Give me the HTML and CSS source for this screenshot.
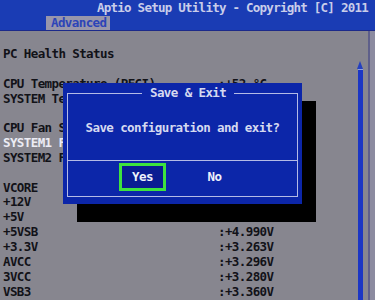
FILE: index.html
```html
<!DOCTYPE html>
<html lang="en">
<head>
  <meta charset="UTF-8" />
  <meta name="viewport" content="width=device-width, initial-scale=1.0"/>
  <title>Aptio Setup Utility</title>
  <link rel="stylesheet" href="styles.css">
</head>
<body>

  <header class="topbar">
    <div class="title">Aptio Setup Utility - Copyright [C] 2011</div>
    <div class="tabs"><span class="tab">Advanced</span></div>
  </header>

  <main class="screen">
    <div class="list">
      <div class="row">PC Health Status</div>
      <div class="row"></div>
      <div class="row"><span class="label">CPU Temperature (PECI)</span><span>:+52 °C</span></div>
      <div class="row"><span class="label">SYSTEM Temperature</span><span>:+36 °C</span></div>
      <div class="row"></div>
      <div class="row"><span class="label">CPU Fan Speed</span><span>:N/A</span></div>
      <div class="row lit"><span class="label">SYSTEM1 Fan Speed</span><span>:N/A</span></div>
      <div class="row"><span class="label">SYSTEM2 Fan Speed</span><span>:N/A</span></div>
      <div class="row"></div>
      <div class="row"><span class="label">VCORE</span><span>:+1.048V</span></div>
      <div class="row"><span class="label">+12V</span><span>:+12.096V</span></div>
      <div class="row"><span class="label">+5V</span><span>:+4.980V</span></div>
      <div class="row"><span class="label">+5VSB</span><span>:+4.990V</span></div>
      <div class="row"><span class="label">+3.3V</span><span>:+3.263V</span></div>
      <div class="row"><span class="label">AVCC</span><span>:+3.296V</span></div>
      <div class="row"><span class="label">3VCC</span><span>:+3.280V</span></div>
      <div class="row"><span class="label">VSB3</span><span>:+3.360V</span></div>
    </div>
    <div class="scroll"></div>
    <div class="edge"></div>
  </main>

  <!-- ventana modal encima de la lista -->
  <div class="dialog">
    <fieldset class="frame">
      <legend>Save &amp; Exit</legend>
      <div class="msg">Save configuration and exit?</div>
      <div class="actions">
        <span class="btn active">Yes</span>
        <span class="btn">No</span>
      </div>
    </fieldset>
  </div>

</body>
</html>
```

FILE: styles.css
```css
body {
  margin: 0;
  width: 375px;
  height: 300px;
  overflow: hidden;
  position: relative;
  font-family: "DejaVu Sans Mono", "Liberation Mono", monospace;
  font-size: 12.5px;
  letter-spacing: -0.6px;
  font-weight: bold;
  background: #87868f;
}

.topbar {
  height: 31px;
  box-sizing: border-box;
  background: #1a3cb4;
  border-bottom: 1px solid #1c2a8a;
  display: flex;
  flex-direction: column;
}

.title {
  color: #c9cdea;
  text-align: right;
  height: 16px;
  line-height: 14px;
  padding: 1px 7px 0 0;
  box-sizing: border-box;
  letter-spacing: -0.75px;
}

.tabs {
  flex: 1;
  display: flex;
  align-items: flex-end;
  padding-left: 46px;
}

.tab {
  background: #9896ab;
  color: #2c44b8;
  height: 14px;
  line-height: 14px;
  padding: 0 4px 0 5px;
}

.screen {
  display: flex;
  height: 269px;
}

.list {
  flex: 1;
  padding: 16px 0 0 3px;
}

.row {
  display: flex;
  height: 14.85px;
  line-height: 14.85px;
  color: #121218;
  white-space: pre;
}

.row.lit {
  color: #ececf4;
}

.label {
  width: 215px;
}

.scroll {
  width: 5px;
  margin: 38px 5px 0 0;
  background: #1b36c4;
  border-top: 1px solid #8fa0e0;
  position: relative;
}

.scroll::before {
  content: "";
  position: absolute;
  top: -9px;
  left: -1px;
  border-left: 3.5px solid transparent;
  border-right: 3.5px solid transparent;
  border-bottom: 8px solid #2440c0;
}

.edge {
  width: 5px;
  border-left: 2px solid #5e5f8a;
  background: #8c8ba0;
}

.dialog {
  position: absolute;
  left: 63px;
  top: 83px;
  width: 239px;
  height: 121px;
  box-sizing: border-box;
  padding: 3px 4px 7px 4px;
  background: #0c26a9;
  box-shadow: 14px 18px 0 #000;
  color: #d5d9f0;
}

.frame {
  margin: 0;
  padding: 0;
  border: 1px solid #b4bbe6;
}

.frame legend {
  margin-left: 74px;
  padding: 0 8px;
  line-height: 14.85px;
}

.msg {
  height: 59px;
  box-sizing: border-box;
  padding-top: 20px;
  text-align: center;
  line-height: 14.85px;
}

.actions {
  border-top: 1px solid #b4bbe6;
  display: flex;
  align-items: flex-start;
  padding: 2px 0 0 51px;
  box-sizing: border-box;
  height: 36px;
  gap: 25px;
}

.btn {
  width: 47px;
  height: 28px;
  box-sizing: border-box;
  display: flex;
  align-items: center;
  justify-content: center;
  color: #eef0fa;
}

.btn.active {
  border: 3px solid #3ee23e;
  background: #0a1c92;
}
```
